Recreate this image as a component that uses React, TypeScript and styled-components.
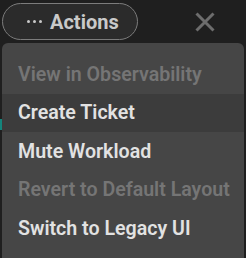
import React from "react";
import styled, { createGlobalStyle } from "styled-components";

const Global = createGlobalStyle`
  html, body { margin: 0; padding: 0; background: #1f1f1f; overflow: hidden; }
  body { font-family: Roboto, "Liberation Sans", sans-serif; }
`;

const Page = styled.div`
  position: relative;
  width: 246px;
  height: 258px;
  background: #1f1f1f;
  padding: 3px 2px 0 2px;
  box-sizing: border-box;
  display: flex;
  flex-direction: column;
  gap: 3px;
`;

const Edge = styled.div`
  position: absolute;
  left: 0;
  top: 119px;
  width: 2px;
  height: 11px;
  background: #14857c;
`;

const TopBar = styled.div`
  display: flex;
  align-items: center;
  height: 37px;
`;

const ActionsButton = styled.button`
  display: flex;
  align-items: center;
  gap: 8px;
  height: 37px;
  width: 136px;
  box-sizing: border-box;
  padding: 0 0 0 24px;
  border: 1px solid #7c7c7c;
  border-radius: 19px;
  background: #2b2b2b;
  color: #c9c9c9;
  font-family: Roboto, "Liberation Sans", sans-serif;
  font-size: 20px;
  font-weight: 700;
`;

const Dots = styled.span`
  display: flex;
  gap: 3px;
  span {
    width: 3px;
    height: 3px;
    border-radius: 50%;
    background: #c9c9c9;
  }
`;

const Close = styled.button`
  margin-left: 55px;
  width: 24px;
  height: 24px;
  padding: 0;
  border: none;
  background: transparent;
  display: flex;
  align-items: center;
  justify-content: center;
`;

const Menu = styled.div`
  flex: 1;
  background: #464646;
  border-radius: 6px 6px 0 0;
  padding: 12px 0;
  display: flex;
  flex-direction: column;
`;

const Item = styled.div<{ $disabled?: boolean; $hover?: boolean }>`
  height: 38.5px;
  flex: none;
  display: flex;
  align-items: center;
  padding-left: 16px;
  font-size: 19.6px;
  font-weight: 600;
  color: ${(p) => (p.$disabled ? "#757575" : "#e2e2e2")};
  background: ${(p) => (p.$hover ? "#3c3c3c" : "transparent")};
`;

export default function App() {
  return (
    <>
      <Global />
      <Page>
        <Edge />
        <TopBar>
          <ActionsButton>
            <Dots>
              <span />
              <span />
              <span />
            </Dots>
            Actions
          </ActionsButton>
          <Close aria-label="close">
            <svg width="22" height="22" viewBox="0 0 22 22">
              <path d="M2.5 2.5 L19.5 19.5 M19.5 2.5 L2.5 19.5" stroke="#6d6d6d" strokeWidth="3" strokeLinecap="butt" />
            </svg>
          </Close>
        </TopBar>
        <Menu>
          <Item $disabled>View in Observability</Item>
          <Item $hover>Create Ticket</Item>
          <Item>Mute Workload</Item>
          <Item $disabled>Revert to Default Layout</Item>
          <Item>Switch to Legacy UI</Item>
        </Menu>
      </Page>
    </>
  );
}
